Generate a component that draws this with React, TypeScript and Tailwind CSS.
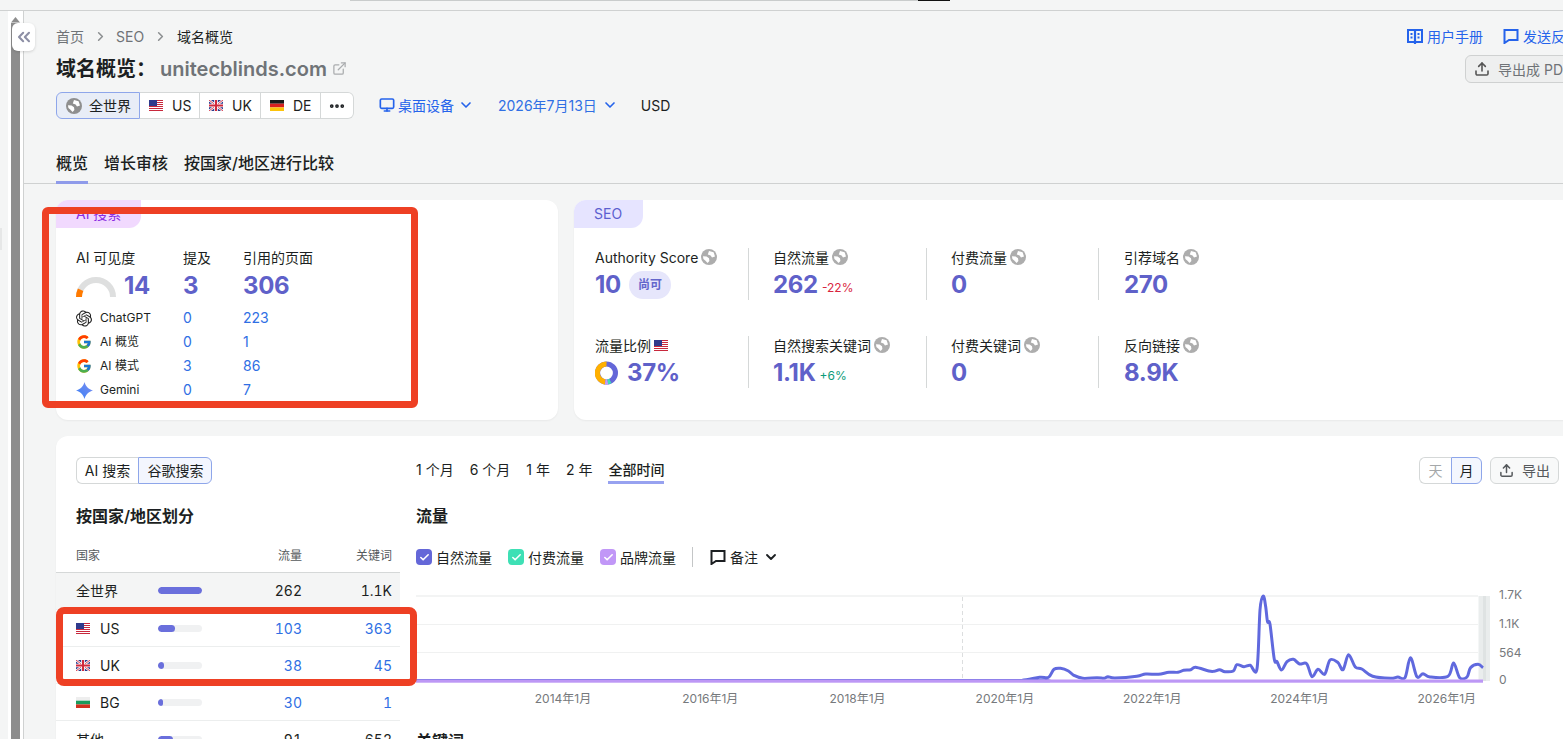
import { ChevronDown, ChevronRight, ChevronsLeft, Check, ExternalLink, Monitor, Ellipsis, Upload } from "lucide-react";
import { FcGoogle } from "react-icons/fc";
import { SiOpenai } from "react-icons/si";

const Globe = ({ size = 16, color = "#8f8f8f" }: { size?: number; color?: string }) => (
  <svg width={size} height={size} viewBox="0 0 16 16" className="shrink-0">
    <circle cx="8" cy="8" r="8" fill={color} />
    <path d="M8 2 12.6 3.2 14 7.4 11 8.4 9.6 6.6 6.8 5.6zM2 7.2 5.6 7.4 8 9.2 8.4 12 6.6 14 4.2 11.4 2.4 10z" fill="#fff" />
  </svg>
);

const FlagUS = () => (
  <svg width="14" height="11" viewBox="0 0 14 11" className="shrink-0">
    <rect width="14" height="11" fill="#fff" />
    {[0, 2, 4, 6, 8, 10].map((y) => (
      <rect key={y} y={y} width="14" height="1" fill="#c8283c" />
    ))}
    <rect width="8" height="6" fill="#2f3a8c" />
  </svg>
);

const FlagUK = () => (
  <svg width="14" height="11" viewBox="0 0 14 11" className="shrink-0">
    <rect width="14" height="11" fill="#2b3a8c" />
    <path d="M0 0 14 11M14 0 0 11" stroke="#fff" strokeWidth="2.4" />
    <path d="M0 0 14 11M14 0 0 11" stroke="#d0283c" strokeWidth="0.9" />
    <path d="M7 0v11M0 5.5h14" stroke="#fff" strokeWidth="3.6" />
    <path d="M7 0v11M0 5.5h14" stroke="#d0283c" strokeWidth="2" />
  </svg>
);

const FlagDE = () => (
  <svg width="14" height="11" viewBox="0 0 14 11" className="shrink-0">
    <rect width="14" height="3.7" fill="#1a1a1a" />
    <rect y="3.7" width="14" height="3.7" fill="#d8201f" />
    <rect y="7.4" width="14" height="3.6" fill="#fcc30b" />
  </svg>
);

const FlagBG = () => (
  <svg width="14" height="11" viewBox="0 0 14 11" className="shrink-0">
    <rect width="14" height="3.7" fill="#eeeeee" />
    <rect y="3.7" width="14" height="3.7" fill="#1a9a5c" />
    <rect y="7.4" width="14" height="3.6" fill="#d0301f" />
  </svg>
);

const Bubble = ({ color }: { color: string }) => (
  <svg width="16" height="16" viewBox="0 0 16 16" fill="none" className="shrink-0">
    <path d="M1.5 2h13v10H6l-4.5 3z" stroke={color} strokeWidth="2" />
  </svg>
);

const BookIcon = () => (
  <svg width="16" height="17" viewBox="0 0 16 17" fill="none" className="shrink-0">
    <path d="M1 2h14v12H1z" stroke="#2563eb" strokeWidth="2" />
    <path d="M8 2v14" stroke="#2563eb" strokeWidth="2.2" />
    <path d="M3.5 5h2v2h-2zM10.5 5h2v2h-2zM3.5 8.5h2v2h-2zM10.5 8.5h2v2h-2z" fill="#2563eb" />
  </svg>
);

const Gemini = () => (
  <svg width="17" height="17" viewBox="0 0 16 16" className="shrink-0">
    <defs>
      <linearGradient id="gem" x1="0" y1="1" x2="1" y2="0">
        <stop offset="0" stopColor="#3b82f6" />
        <stop offset="1" stopColor="#7c8cf0" />
      </linearGradient>
    </defs>
    <path d="M8 0C9 4 12 7 16 8 12 9 9 12 8 16 7 12 4 9 0 8 4 7 7 4 8 0z" fill="url(#gem)" />
  </svg>
);

const Gauge = () => (
  <svg width="40" height="20" viewBox="0 0 40 20" className="mt-[3px] shrink-0">
    <path d="M3 20A17 17 0 0 1 37 20" fill="none" stroke="#dedfdf" strokeWidth="6" />
    <path d="M3 20A17 17 0 0 1 4.6 12.8" fill="none" stroke="#ff7a00" strokeWidth="6" />
  </svg>
);

const Donut = () => (
  <svg width="23" height="24" viewBox="0 0 36 36" className="shrink-0">
    <circle cx="18" cy="18" r="14" fill="none" stroke="#6467d8" strokeWidth="8" />
    <path d="M18 4A14 14 0 0 0 16 31.9" fill="none" stroke="#ffb000" strokeWidth="8" />
    <path d="M16 31.9A14 14 0 0 0 20 31.8" fill="none" stroke="#c79bf5" strokeWidth="8" />
    <path d="M20 31.8A14 14 0 0 0 24 30.6" fill="none" stroke="#3ee0b5" strokeWidth="8" />
  </svg>
);

const filters = [
  { name: "US", flag: <FlagUS />, w: "w-[60px]" },
  { name: "UK", flag: <FlagUK />, w: "w-[61px]" },
  { name: "DE", flag: <FlagDE />, w: "w-[60px]" },
];

const aiRows = [
  { icon: <SiOpenai size={17} color="#222" />, name: "ChatGPT", a: "0", b: "223" },
  { icon: <FcGoogle size={20} />, name: "AI 概览", a: "0", b: "1" },
  { icon: <FcGoogle size={20} />, name: "AI 模式", a: "3", b: "86" },
  { icon: <Gemini />, name: "Gemini", a: "0", b: "7" },
];

const seoRows = [
  [
    { label: "Authority Score", value: "10", badge: "尚可" },
    { label: "自然流量", value: "262", delta: "-22%", deltaCls: "text-[#d9263f]" },
    { label: "付费流量", value: "0" },
    { label: "引荐域名", value: "270" },
  ],
  [
    { label: "流量比例", value: "37%", donut: true },
    { label: "自然搜索关键词", value: "1.1K", delta: "+6%", deltaCls: "text-[#0c9b7a]" },
    { label: "付费关键词", value: "0" },
    { label: "反向链接", value: "8.9K" },
  ],
];

const cols = ["w-[153px]", "w-[178px] border-l border-[#d5d8d8] pl-[24px]", "w-[172px] border-l border-[#d5d8d8] pl-[24px]", "flex-1 border-l border-[#d5d8d8] pl-[25px]"];

const countries = [
  { name: "全世界", bar: "w-[44px]", t: "262", k: "1.1K", top: true },
  { name: "US", flag: <FlagUS />, bar: "w-[17px]", t: "103", k: "363" },
  { name: "UK", flag: <FlagUK />, bar: "w-[6px]", t: "38", k: "45" },
  { name: "BG", flag: <FlagBG />, bar: "w-[5px]", t: "30", k: "1" },
  { name: "其他", bar: "w-[15px]", t: "91", k: "652", other: true },
];

const legend = [
  { name: "自然流量", cls: "bg-[#6467d8]" },
  { name: "付费流量", cls: "bg-[#3ee0b5]" },
  { name: "品牌流量", cls: "bg-[#c197f7]" },
];

const pts: number[][] = [
  [416, 680.6], [1000, 680.6], [1021.6, 680.4], [1039.6, 677.3], [1048.6, 677.3], [1054, 669.3], [1060.5, 668.3], [1068.4, 671],
  [1073.8, 675.3], [1082.8, 678.3], [1097, 677.7], [1104, 678.3], [1108, 676.7], [1115, 678], [1136.8, 676.3], [1145.8, 674],
  [1158.4, 674.3], [1169, 672.3], [1178, 672.3], [1183.6, 670.3], [1190.8, 669.7], [1195.5, 667.3], [1208.8, 671], [1214, 671.3],
  [1219.6, 669.7], [1225, 671.7], [1233.3, 671], [1236.9, 664.7], [1244, 666.7], [1250.2, 665.3], [1257, 668.7], [1260, 610],
  [1263.2, 596], [1265.7, 606.7], [1267.5, 621.7], [1270, 624.3], [1274.3, 659.3], [1277, 661.7], [1281.5, 670], [1287, 661.7],
  [1293.4, 659.3], [1299.5, 664], [1306.7, 663.7], [1312, 676.7], [1318, 669.3], [1324.7, 674.3], [1330, 660], [1337.7, 662.3],
  [1343, 669.7], [1348.5, 654.7], [1355.3, 667], [1361.8, 669], [1372.6, 676.3], [1390.6, 678.3], [1397.8, 677], [1405, 677.7],
  [1410.4, 657.7], [1416.9, 676.7], [1423, 673.7], [1430, 677], [1448, 676.3], [1453.6, 663], [1459.7, 677.7], [1467, 677],
  [1470.5, 667.7], [1478, 664.3], [1483, 667.7],
];

// catmull-rom through the points so the line looks like the smoothed chart
const smooth = (p: number[][]) => {
  let d = `M${p[0][0]} ${p[0][1]}`;
  for (let i = 0; i < p.length - 1; i++) {
    const a = p[Math.max(i - 1, 0)];
    const b = p[i];
    const c = p[i + 1];
    const e = p[Math.min(i + 2, p.length - 1)];
    const c1x = b[0] + (c[0] - a[0]) / 6;
    const c1y = b[1] + (c[1] - a[1]) / 6;
    const c2x = c[0] - (e[0] - b[0]) / 6;
    const c2y = c[1] - (e[1] - b[1]) / 6;
    d += ` C${c1x.toFixed(1)} ${c1y.toFixed(1)} ${c2x.toFixed(1)} ${c2y.toFixed(1)} ${c[0]} ${c[1]}`;
  }
  return d;
};

const TrafficChart = () => (
  <svg width="1123" height="120" viewBox="416 590 1123 120" className="mt-[22px] block" fontFamily="Inter, 'Noto Sans CJK SC', sans-serif">
    <path d="M416 596H1478" stroke="#f3f4f4" strokeWidth="2" />
    <path d="M416 624.5H1478M416 652.5H1478" stroke="#f0f1f1" />
    <path d="M962.5 597V680" stroke="#dcdedf" strokeDasharray="4 3" />
    <rect x="1478.5" y="596" width="11.5" height="85" fill="#eaeded" />
    <rect x="1483" y="596" width="3" height="85" fill="#dfe3e3" />
    <path d={smooth(pts)} fill="none" stroke="#6069de" strokeWidth="3" strokeLinejoin="round" />
    <rect x="416" y="679.5" width="1067" height="3.2" fill="#bd98f5" />
    {["2014年1月", "2016年1月", "2018年1月", "2020年1月", "2022年1月", "2024年1月", "2026年1月"].map((t, i) => (
      <text key={t} x={563 + i * 147.3} y="703" textAnchor="middle" fontSize="12" fill="#76797c">
        {t}
      </text>
    ))}
    {[["1.7K", 598.5], ["1.1K", 627.5], ["564", 656.5], ["0", 683.5]].map(([t, y]) => (
      <text key={t} x="1499" y={y} fontSize="12" fill="#76797c">
        {t}
      </text>
    ))}
  </svg>
);

export default function App() {
  return (
    <div className="relative flex h-screen w-[1563px] flex-col overflow-hidden bg-[#f4f5f5] font-['Inter','Noto_Sans_CJK_SC',sans-serif] text-[14px] text-[#1c1f22]">
      <div className="h-[11px] shrink-0 border-b border-[#cfd1d1]">
        <div className="ml-[350px] flex h-[1px] w-[600px] justify-end bg-[#c9cccc]">
          <div className="h-[1px] w-[32px] bg-[#111]" />
        </div>
      </div>

      <div className="flex min-h-0 flex-1">
        <div className="flex w-[24px] shrink-0">
          <div className="flex w-[8px] flex-col">
            <div className="mt-[217px] h-[22px] w-[2px] bg-[#e6e7e7]" />
          </div>
          <div className="w-[3px] bg-white" />
          <div className="flex w-[9px] flex-col bg-white">
            <svg width="9" height="12" viewBox="0 0 9 12" className="shrink-0">
              <path d="M4.5 6 9 11.5H0z" fill="#8d8d8d" />
            </svg>
            <div className="flex-1 bg-[#8d8d8d]" />
          </div>
          <div className="w-[3px] bg-white" />
          <div className="w-px bg-[#cfd1d1]" />
        </div>

        <main className="w-[1555px] shrink-0">
          <div className="pl-[32px] pt-[15px]">
            <div className="flex h-[20px] items-center">
              <span className="text-[#6f7377]">首页</span>
              <ChevronRight size={15} strokeWidth={2.5} className="ml-[9px] mr-[8px] text-[#8c8f91]" />
              <span className="text-[#6f7377]">SEO</span>
              <ChevronRight size={15} strokeWidth={2.5} className="mx-[9px] text-[#8c8f91]" />
              <span>域名概览</span>
              <div className="ml-auto flex items-center gap-[20px] text-[#2563eb]">
                <span className="flex items-center gap-[4px]"><BookIcon />用户手册</span>
                <span className="flex items-center gap-[4px]"><Bubble color="#2563eb" />发送反馈</span>
              </div>
            </div>

            <div className="mt-[8px] flex h-[29px] items-center">
              <span className="text-[20px] font-semibold">域名概览：</span>
              <span className="ml-[4px] text-[20px] font-semibold text-[#6f7377]">unitecblinds.com</span>
              <ExternalLink size={15} className="ml-[5px] text-[#a9acae]" />
              <button className="ml-auto mt-px flex h-[28px] w-[114px] items-center gap-[8px] rounded-[6px] border border-[#cfd1d1] bg-[#eeefef] pl-[8px] text-[#6f7377]">
                <Upload size={16} strokeWidth={2.4} className="text-[#555]" />
                <span className="whitespace-nowrap">导出成 PDF</span>
              </button>
            </div>

            <div className="mt-[9px] flex h-[27px] items-center">
              <div className="flex h-full rounded-[6px] bg-white">
                <div className="flex w-[84px] items-center gap-[7px] rounded-l-[6px] border border-[#8ea6ea] bg-[#e8edf7] pl-[9px]">
                  <Globe />
                  全世界
                </div>
                {filters.map((f) => (
                  <div key={f.name} className={`flex ${f.w} items-center gap-[9px] border-y border-r border-[#d5d8d8] pl-[9px]`}>
                    {f.flag}
                    {f.name}
                  </div>
                ))}
                <div className="flex w-[33px] items-center justify-center rounded-r-[6px] border-y border-r border-[#d5d8d8]">
                  <Ellipsis size={18} strokeWidth={3} />
                </div>
              </div>
              <div className="ml-[25px] flex items-center pb-px text-[#2563eb]">
                <Monitor size={16} strokeWidth={2.5} />
                <span className="ml-[3px]">桌面设备</span>
                <ChevronDown size={16} strokeWidth={2.5} className="ml-[4px]" />
              </div>
              <div className="ml-[24px] flex items-center pb-px text-[#2f6fe4]">
                2026年7月13日
                <ChevronDown size={16} strokeWidth={2.5} className="ml-[5px] text-[#2563eb]" />
              </div>
              <span className="ml-[23px] pb-px">USD</span>
            </div>
          </div>

          <div className="mt-[32px] flex h-[33px] gap-[16px] border-b border-[#cfd1d1] pl-[32px] text-[16px] font-medium">
            <div className="h-[33px] border-b-[3px] border-[#8f9bea] leading-[24px]">概览</div>
            <div className="leading-[24px]">增长审核</div>
            <div className="leading-[24px]">按国家/地区进行比较</div>
          </div>

          <div className="pl-[32px] pt-[16px]">
            <div className="flex gap-[16px]">
              <section className="h-[220px] w-[502px] shrink-0 rounded-[12px] bg-white shadow-[0_1px_2px_rgba(0,0,0,0.05)]">
                <div className="flex h-[28px] w-[85px] items-center rounded-tl-[12px] rounded-br-[12px] bg-[#f1d9fe] pb-[2px] pl-[20px] text-[#8a2be2]">AI 搜索</div>
                <div className="ml-[20px] mt-[20px] grid grid-cols-[107px_60px_1fr]">
                  <div className="h-[19px] leading-[19px]">AI 可见度</div>
                  <div className="h-[19px] leading-[19px]">提及</div>
                  <div className="h-[19px] leading-[19px]">引用的页面</div>
                  <div className="mt-[3px] flex h-[31px] items-center gap-[8px] text-[24px] font-bold tracking-[-0.3px] text-[#5f61c9]"><Gauge />14</div>
                  <div className="mt-[3px] flex h-[31px] items-center text-[24px] font-bold tracking-[-0.3px] text-[#5f61c9]">3</div>
                  <div className="mt-[3px] flex h-[31px] items-center text-[24px] font-bold tracking-[-0.3px] text-[#5f61c9]">306</div>
                  <div className="col-span-3 h-[5px]" />
                  {aiRows.map((r) => (
                    <div key={r.name} className="col-span-3 grid h-[24px] grid-cols-[107px_60px_1fr] items-center">
                      <div className="flex items-center gap-[8px] text-[12px]">
                        <span className="flex w-[16px] justify-center">{r.icon}</span>
                        {r.name}
                      </div>
                      <div className="pb-px text-[#2f6fe4]">{r.a}</div>
                      <div className="pb-px text-[#2f6fe4]">{r.b}</div>
                    </div>
                  ))}
                </div>
              </section>

              <section className="h-[220px] flex-1 rounded-[12px] bg-white shadow-[0_1px_2px_rgba(0,0,0,0.05)]">
                <div className="flex h-[28px] w-[69px] items-center rounded-tl-[12px] rounded-br-[12px] bg-[#e6e4ff] pb-[2px] pl-[20px] text-[#5c5fd0]">SEO</div>
                <div className="ml-[21px] mt-[20px] flex flex-col gap-[36px]">
                  {seoRows.map((row, ri) => (
                    <div key={ri} className="flex h-[52px]">
                      {row.map((c, i) => (
                        <div key={c.label} className={cols[i]}>
                          <div className="flex h-[18px] items-center gap-[3px] whitespace-nowrap">
                            {c.label}
                            {c.donut ? <FlagUS /> : <Globe color="#adadad" />}
                          </div>
                          <div className="mt-[4px] flex h-[30px] items-center text-[24px] font-bold tracking-[-0.3px] text-[#5f61c9]">
                            {c.donut && <span className="mr-[9px]"><Donut /></span>}
                            {c.value}
                            {c.badge && <span className="ml-[8px] flex h-[28px] w-[42px] items-center justify-center rounded-full bg-[#e6e6fb] text-[12px] font-semibold tracking-normal text-[#6466cc]">{c.badge}</span>}
                            {c.delta && <span className={`ml-[4px] mt-[6px] text-[12px] font-normal tracking-normal ${c.deltaCls}`}>{c.delta}</span>}
                          </div>
                        </div>
                      ))}
                    </div>
                  ))}
                </div>
              </section>
            </div>

            <section className="mt-[16px] flex h-[400px] rounded-[12px] bg-white pt-[21px] shadow-[0_1px_2px_rgba(0,0,0,0.05)]">
              <div className="w-[344px] shrink-0">
                <div className="ml-[20px] flex h-[27px] w-[136px]">
                  <div className="flex w-[62px] items-center justify-center rounded-l-[6px] border-y border-l border-[#d5d8d8] pb-px">AI 搜索</div>
                  <div className="flex w-[74px] items-center justify-center rounded-r-[6px] border border-[#8ea6ea] bg-[#f3f6fe] pb-px pl-px">谷歌搜索</div>
                </div>
                <h3 className="ml-[20px] mt-[20px] h-[24px] text-[16px] font-semibold leading-[24px]">按国家/地区划分</h3>
                <div className="mt-[9px] flex h-[36px] items-center border-b border-[#d5d8d8] pl-[20px] pr-[8px] pt-[2px] text-[12px] text-[#55595c]">
                  <span className="flex-1">国家</span>
                  <span className="w-[60px] text-right">流量</span>
                  <span className="w-[90px] text-right">关键词</span>
                </div>
                {countries.map((c) => {
                  const link = c.top || c.other ? "" : "text-[#2f6fe4]";
                  return (
                    <div key={c.name} className={`flex h-[37px] shrink-0 items-center border-b border-[#eceeee] pl-[20px] pr-[8px] tabular-nums ${c.top ? "bg-[#f4f5f5] pb-px" : ""}`}>
                      <div className="flex w-[82px] items-center gap-[10px]">
                        {c.flag}
                        {c.name}
                      </div>
                      <div className="h-[7px] w-[44px] overflow-hidden rounded-full bg-[#f0f1f2]">
                        <div className={`h-full rounded-full bg-[#6a6fdc] ${c.bar}`} />
                      </div>
                      <span className={`w-[100px] text-right ${link}`}>{c.t}</span>
                      <span className={`w-[90px] text-right ${link}`}>{c.k}</span>
                    </div>
                  );
                })}
              </div>

              <div className="ml-[16px] min-w-0 flex-1 pr-[20px]">
                <div className="flex h-[27px] items-center">
                  <div className="flex h-[27px] gap-[16px] leading-[26px]">
                    <span>1 个月</span>
                    <span>6 个月</span>
                    <span>1 年</span>
                    <span>2 年</span>
                    <span className="h-[27px] border-b-[3px] border-[#97a2f0] font-medium">全部时间</span>
                  </div>
                  <div className="ml-auto flex h-[27px] w-[63px]">
                    <div className="flex w-[32px] items-center justify-center rounded-l-[6px] border-y border-l border-[#d5d8d8] pb-px text-[#a5a8aa]">天</div>
                    <div className="flex w-[31px] items-center justify-center rounded-r-[6px] border border-[#8ea6ea] bg-[#f3f6fe] pb-px">月</div>
                  </div>
                  <button className="ml-[8px] flex h-[27px] w-[69px] items-center justify-center gap-[8px] rounded-[6px] border border-[#d5d8d8] bg-[#f8f9f9] pb-px text-[#55595c]">
                    <Upload size={15} strokeWidth={2.4} />
                    导出
                  </button>
                </div>
                <h3 className="mt-[20px] h-[24px] text-[16px] font-semibold leading-[24px]">流量</h3>
                <div className="mt-[19px] flex h-[20px] items-center">
                  {legend.map((l) => (
                    <div key={l.name} className="mr-[16px] flex items-center gap-[4px]">
                      <span className={`flex h-[16px] w-[16px] items-center justify-center rounded-[4px] ${l.cls}`}>
                        <Check size={11} strokeWidth={3.5} color="#fff" />
                      </span>
                      {l.name}
                    </div>
                  ))}
                  <div className="h-[20px] w-px bg-[#c4c6c7]" />
                  <div className="ml-[17px] flex items-center gap-[4px]">
                    <Bubble color="#1c1f22" />
                    备注
                    <ChevronDown size={16} strokeWidth={2.8} className="ml-px" />
                  </div>
                </div>
                <div className="h-px" />
                <TrafficChart />
                <h3 className="mt-[19px] text-[16px] font-semibold leading-[24px]">关键词</h3>
              </div>
            </section>
          </div>
        </main>
      </div>

      {/* collapse button sits over the scrollbar rail */}
      <button className="absolute left-[12px] top-[23px] flex h-[28px] w-[23px] items-center justify-center rounded-[6px] bg-white shadow-[0_1px_3px_rgba(0,0,0,0.15)]">
        <ChevronsLeft size={20} strokeWidth={2.5} className="text-[#8d8fa5]" />
      </button>

      {/* red annotation boxes drawn on top of the screenshot */}
      <div className="absolute left-[42px] top-[207px] h-[201px] w-[376px] rounded-[6px] border-[7px] border-[#ee4024]" />
      <div className="absolute left-[56px] top-[607px] h-[79px] w-[361px] rounded-[8px] border-[7px] border-[#ee4024]" />
    </div>
  );
}
